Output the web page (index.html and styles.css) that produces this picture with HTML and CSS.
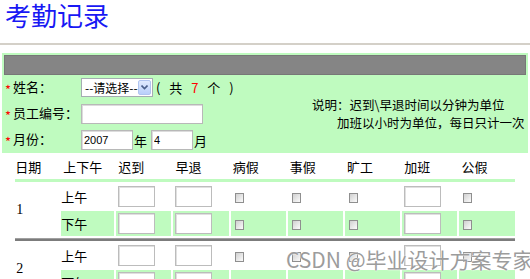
FILE: index.html
```html
<!DOCTYPE html>
<html>
<head>
    <meta charset="utf-8">
    <title>考勤记录</title>
    <link rel="stylesheet" href="styles.css">
</head>
<body>
    <h1 class="page-title">考勤记录</h1>
    <hr class="title-rule">

    <div class="form-panel">
        <div class="panel-bar"></div>
        <div class="panel-body">
            <div class="fields">
                <div class="field-row row-name">
                    <label class="field-label"><span class="req">*</span>姓名：</label>
                    <span class="select">
                        <span class="select-text">--请选择--</span>
                        <span class="select-btn">
                            <svg width="7" height="5" viewBox="0 0 7 5"><path d="M0.5 0.5 L3.5 3.5 L6.5 0.5" fill="none" stroke="#4a5f8a" stroke-width="1.6"/></svg>
                        </span>
                    </span>
                    <span class="count">( 共 <span class="num">7</span> 个 )</span>
                </div>
                <div class="field-row row-no">
                    <label class="field-label"><span class="req">*</span>员工编号：</label>
                    <input type="text" class="inp inp-no">
                </div>
                <div class="field-row row-month">
                    <label class="field-label"><span class="req">*</span>月份：</label>
                    <input type="text" class="inp inp-year" value="2007">
                    <span class="unit">年</span>
                    <input type="text" class="inp inp-month" value="4">
                    <span class="unit">月</span>
                </div>
            </div>
            <div class="note">
                <div>说明：迟到\早退时间以分钟为单位</div>
                <div class="note-indent">加班以小时为单位，每日只计一次</div>
            </div>
        </div>
    </div>

    <table class="attend">
        <colgroup>
            <col class="c-date">
            <col class="c-ampm">
            <col><col><col><col><col><col><col>
        </colgroup>
        <tr class="head">
            <td>日期</td><td>上下午</td><td>迟到</td><td>早退</td><td>病假</td><td>事假</td><td>旷工</td><td>加班</td><td>公假</td>
        </tr>
        <tr class="line-green"><td colspan="9"></td></tr>

        <tr class="am">
            <td class="date" rowspan="2">1</td>
            <td>上午</td>
            <td><input type="text" class="cell-inp"></td>
            <td><input type="text" class="cell-inp"></td>
            <td><input type="checkbox" class="chk"></td>
            <td><input type="checkbox" class="chk"></td>
            <td><input type="checkbox" class="chk"></td>
            <td><input type="text" class="cell-inp"></td>
            <td><input type="checkbox" class="chk"></td>
        </tr>
        <tr class="pm">
            <td>下午</td>
            <td><input type="text" class="cell-inp"></td>
            <td><input type="text" class="cell-inp"></td>
            <td><input type="checkbox" class="chk"></td>
            <td><input type="checkbox" class="chk"></td>
            <td><input type="checkbox" class="chk"></td>
            <td><input type="text" class="cell-inp"></td>
            <td><input type="checkbox" class="chk"></td>
        </tr>
        <tr class="line-gray"><td colspan="9"></td></tr>

        <tr class="am">
            <td class="date" rowspan="2">2</td>
            <td>上午</td>
            <td><input type="text" class="cell-inp"></td>
            <td><input type="text" class="cell-inp"></td>
            <td><input type="checkbox" class="chk"></td>
            <td><input type="checkbox" class="chk"></td>
            <td><input type="checkbox" class="chk"></td>
            <td><input type="text" class="cell-inp"></td>
            <td><input type="checkbox" class="chk"></td>
        </tr>
        <tr class="pm">
            <td>下午</td>
            <td><input type="text" class="cell-inp"></td>
            <td><input type="text" class="cell-inp"></td>
            <td><input type="checkbox" class="chk"></td>
            <td><input type="checkbox" class="chk"></td>
            <td><input type="checkbox" class="chk"></td>
            <td><input type="text" class="cell-inp"></td>
            <td><input type="checkbox" class="chk"></td>
        </tr>
    </table>

    <div class="watermark">CSDN @毕业设计方案专家</div>
</body>
</html>
```

FILE: styles.css
```css
body {
    margin: 0;
    font-family: "Noto Sans CJK SC", sans-serif;
    font-size: 13px;
    color: #000;
    background: #fff;
    overflow: hidden;
}

.page-title {
    margin: 0;
    padding-left: 5px;
    height: 43px;
    font-size: 26px;
    line-height: 30px;
    font-weight: normal;
    color: #1818f4;
}

.title-rule {
    margin: 0;
    border: 0;
    height: 2px;
    background: #d4d0c8;
}

/* top form panel */
.form-panel {
    box-sizing: border-box;
    width: 526px;
    margin: 8px 0 0 2px;
    padding: 2px 2px 0;
    background: #bffbbf;
}

.panel-bar {
    box-sizing: border-box;
    height: 20px;
    background: #858585;
    border: 1px solid #777;
}

.panel-body {
    display: flex;
    align-items: center;
}

.fields {
    flex: 0 0 304px;
    display: flex;
    flex-direction: column;
}

.field-row {
    display: flex;
    align-items: center;
    height: 26px;
}

.row-name {
    height: 25px;
}

.row-no {
    height: 27px;
}

.field-label {
    width: 77px;
    font-size: 13px;
}

.req {
    display: inline-block;
    width: 8px;
    margin-left: 1px;
    color: #ff0000;
    font-size: 13px;
    vertical-align: -3px;
}

.select {
    box-sizing: border-box;
    display: inline-flex;
    align-items: center;
    justify-content: space-between;
    width: 72px;
    height: 19px;
    background: #fff;
    border: 1px solid #a5acb2;
}

.select-text {
    padding-left: 3px;
    font-size: 12px;
    line-height: 17px;
}

.select-btn {
    box-sizing: border-box;
    display: flex;
    align-items: center;
    justify-content: center;
    width: 13px;
    height: 15px;
    margin-right: 1px;
    background: linear-gradient(#e0eafe, #b9cffa);
    border: 1px solid #b0c4f0;
    border-radius: 2px;
}

.count {
    margin-left: 3px;
    word-spacing: 6px;
}

.count .num {
    color: #ff0000;
}

.inp {
    box-sizing: border-box;
    height: 20px;
    padding: 0 2px;
    border: 1px solid #b8b8b8;
    box-shadow: inset 1px 1px 0 #dcdcdc;
    background: #fff;
    font-family: "Liberation Sans", sans-serif;
    font-size: 11px;
}

.inp-no {
    width: 122px;
}

.inp-year {
    width: 52px;
}

.inp-month {
    width: 42px;
}

.unit {
    margin: 0 4px 0 1px;
}

.note {
    padding-left: 4px;
    font-size: 12.5px;
    line-height: 18px;
}

.note-indent {
    padding-left: 25px;
}

/* attendance table */
.attend {
    width: 95%;
    margin: 0 auto;
    border-spacing: 2px;
    table-layout: fixed;
}

.c-date {
    width: 44px;
}

.c-ampm {
    width: 53px;
}

.attend td {
    padding: 1px 2px;
    text-align: left;
    vertical-align: middle;
}

.attend td:first-child,
.attend tr.pm td:first-child,
.attend tr.am td:nth-child(2) {
    padding-left: 0;
}

.head td {
    height: 20px;
    font-size: 13px;
}

.line-green td {
    height: 3px;
    padding: 0;
    background: #bffbbf;
    font-size: 0;
    line-height: 0;
}

.line-gray td {
    height: 3px;
    padding: 0;
    background: #7c7c7c;
    border-top: 1px solid #a0a0a0;
    box-sizing: border-box;
    font-size: 0;
    line-height: 0;
}

.am td,
.pm td {
    height: 23px;
}

.pm td {
    background: #bffbbf;
}

.attend td.date {
    padding-left: 1px;
    font-family: "Liberation Serif", serif;
    font-size: 14px;
    background: #fff;
}

.cell-inp {
    box-sizing: border-box;
    width: 37px;
    height: 21px;
    margin: 0;
    border: 1px solid #bcbcbc;
    box-shadow: inset 1px 1px 0 #e0e0e0;
    background: #fff;
    vertical-align: middle;
}

.chk {
    -webkit-appearance: none;
    appearance: none;
    box-sizing: border-box;
    width: 9px;
    height: 10px;
    margin: 0 0 0 2px;
    border: 1px solid #8f8f8f;
    background: linear-gradient(135deg, #d0d0d0, #fbfbfb);
    vertical-align: middle;
}

.watermark {
    position: absolute;
    left: 286px;
    top: 249px;
    font-size: 21px;
    line-height: 21px;
    color: #9c9c9c;
    text-shadow: 0 0 2px #fff, 0 0 1px #fff;
    white-space: nowrap;
}
```
